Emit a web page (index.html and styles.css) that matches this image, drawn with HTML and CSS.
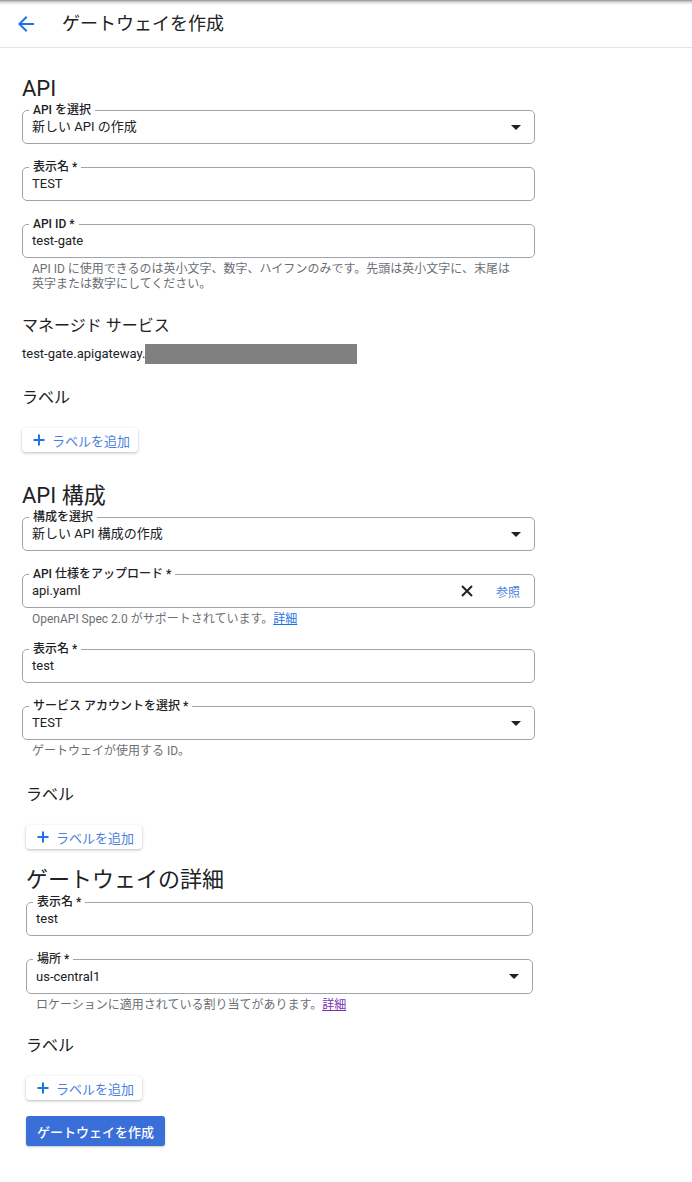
FILE: index.html
```html
<!DOCTYPE html>
<html lang="ja">
<head>
    <meta charset="UTF-8">
    <meta name="viewport" content="width=device-width, initial-scale=1.0">
    <title>ゲートウェイを作成</title>
    <link rel="stylesheet" href="styles.css">
</head>
<body>
    <header class="top-bar">
        <a class="back-link" href="#">
            <svg width="24" height="24" viewBox="0 0 24 24"><path d="M20 11H7.83l5.59-5.59L12 4l-8 8 8 8 1.41-1.41L7.83 13H20v-2z" fill="#1a73e8"/></svg>
        </a>
        <h1 class="page-title">ゲートウェイを作成</h1>
    </header>

    <main class="content">
        <!-- API -->
        <h2 class="section-title">API</h2>
        <fieldset class="field">
            <legend>API を選択</legend>
            <div class="field-row">
                <span class="field-value">新しい API の作成</span>
                <span class="caret"></span>
            </div>
        </fieldset>
        <fieldset class="field field-next">
            <legend>表示名 *</legend>
            <div class="field-row"><span class="field-value">TEST</span></div>
        </fieldset>
        <fieldset class="field field-next">
            <legend>API ID *</legend>
            <div class="field-row"><span class="field-value">test-gate</span></div>
        </fieldset>
        <p class="hint hint-two">API ID に使用できるのは英小文字、数字、ハイフンのみです。先頭は英小文字に、末尾は<br>英字または数字にしてください。</p>

        <h3 class="sub-title managed">マネージド サービス</h3>
        <p class="service-url">test-gate.apigateway.<span class="masked"></span></p>

        <h3 class="sub-title label-title">ラベル</h3>
        <button class="add-label">
            <svg width="12" height="12" viewBox="0 0 12 12"><path d="M6 0.5v11M0.5 6h11" stroke="#1a73e8" stroke-width="2"/></svg>
            ラベルを追加
        </button>

        <!-- API 構成 -->
        <h2 class="section-title section-gap">API 構成</h2>
        <fieldset class="field">
            <legend>構成を選択</legend>
            <div class="field-row">
                <span class="field-value">新しい API 構成の作成</span>
                <span class="caret"></span>
            </div>
        </fieldset>
        <fieldset class="field field-next">
            <legend>API 仕様をアップロード *</legend>
            <div class="field-row">
                <span class="field-value">api.yaml</span>
                <span class="clear-icon">
                    <svg width="12" height="12" viewBox="0 0 12 12"><path d="M1 1l10 10M11 1L1 11" stroke="#202124" stroke-width="2"/></svg>
                </span>
                <a class="browse" href="#">参照</a>
            </div>
        </fieldset>
        <p class="hint">OpenAPI Spec 2.0 がサポートされています。<a href="#">詳細</a></p>
        <fieldset class="field field-after-hint">
            <legend>表示名 *</legend>
            <div class="field-row"><span class="field-value">test</span></div>
        </fieldset>
        <fieldset class="field field-next">
            <legend>サービス アカウントを選択 *</legend>
            <div class="field-row">
                <span class="field-value">TEST</span>
                <span class="caret"></span>
            </div>
        </fieldset>
        <p class="hint">ゲートウェイが使用する ID。</p>

        <div class="shifted">
            <h3 class="sub-title label-title-2">ラベル</h3>
            <button class="add-label">
                <svg width="12" height="12" viewBox="0 0 12 12"><path d="M6 0.5v11M0.5 6h11" stroke="#1a73e8" stroke-width="2"/></svg>
                ラベルを追加
            </button>

            <!-- ゲートウェイの詳細 -->
            <h2 class="section-title section-gap-2">ゲートウェイの詳細</h2>
            <fieldset class="field field-first">
                <legend>表示名 *</legend>
                <div class="field-row"><span class="field-value">test</span></div>
            </fieldset>
            <fieldset class="field field-next">
                <legend>場所 *</legend>
                <div class="field-row tall">
                    <span class="field-value">us-central1</span>
                    <span class="caret"></span>
                </div>
            </fieldset>
            <p class="hint">ロケーションに適用されている割り当てがあります。<a class="visited" href="#">詳細</a></p>

            <h3 class="sub-title label-title-3">ラベル</h3>
            <button class="add-label">
                <svg width="12" height="12" viewBox="0 0 12 12"><path d="M6 0.5v11M0.5 6h11" stroke="#1a73e8" stroke-width="2"/></svg>
                ラベルを追加
            </button>

            <div>
                <button class="create-button">ゲートウェイを作成</button>
            </div>
        </div>
    </main>
</body>
</html>
```

FILE: styles.css
```css
body {
    font-family: Roboto, "Noto Sans CJK JP", sans-serif;
    color: #202124;
    background-color: #fff;
    margin: 0;
    padding: 0;
}
.top-bar {
    display: flex;
    align-items: center;
    height: 47px;
    padding-left: 14px;
    border-bottom: 1px solid #e4e5e7;
    background: linear-gradient(#8f8f8f, #d8d8d8 2px, #fff 5px);
}
.back-link {
    display: flex;
    width: 24px;
    height: 24px;
}
.page-title {
    margin: 0 0 0 24px;
    font-size: 18px;
    font-weight: 400;
    line-height: 24px;
}
.content {
    padding: 27px 0 40px 22px;
}
.section-title {
    margin: 0;
    font-size: 22px;
    font-weight: 400;
    line-height: 28px;
}
.section-gap {
    margin-top: 30px;
}
.section-gap-2 {
    margin-top: 17px;
}
.field {
    box-sizing: border-box;
    width: 513px;
    margin: 0;
    padding: 1px 9px 7px 6px;
    border: 1px solid #a0a4a8;
    border-radius: 5px;
    min-width: 0;
}
.shifted {
    margin-left: 4px;
}
.shifted .field {
    width: 507px;
}
.field-next {
    margin-top: 16px;
}
.field-after-hint {
    margin-top: 15px;
}
.field-first {
    margin-top: 1px;
}
.field legend {
    padding: 0 4px;
    font-size: 12px;
    font-weight: 500;
    line-height: 14px;
}
.field-row {
    display: flex;
    align-items: center;
    height: 18px;
    padding-left: 3px;
    font-size: 13px;
}
.field-row.tall {
    height: 19px;
}
.field-value {
    flex: 1;
    line-height: 18px;
}
.caret {
    width: 0;
    height: 0;
    margin-right: 4px;
    border-left: 5px solid transparent;
    border-right: 5px solid transparent;
    border-top: 5px solid #202124;
}
.clear-icon {
    display: flex;
    margin-right: 23px;
}
.browse {
    margin-right: 5px;
    font-size: 12px;
    color: #4a7fe0;
    text-decoration: none;
}
.hint {
    margin: 4px 0 0 10px;
    font-size: 12px;
    line-height: 15px;
    color: #6b6f74;
}
.hint a {
    color: #1a73e8;
}
.hint a.visited {
    color: #7b2fb5;
}
.sub-title {
    margin: 0;
    font-size: 16px;
    font-weight: 400;
    line-height: 20px;
}
.managed {
    margin-top: 24px;
}
.label-title {
    margin-top: 24px;
}
.label-title-2 {
    margin-top: 26px;
}
.label-title-3 {
    margin-top: 23px;
}
.service-url {
    margin: 8px 0 0;
    font-size: 13px;
    line-height: 20px;
}
.masked {
    display: inline-block;
    width: 212px;
    height: 20px;
    vertical-align: top;
    background-color: #808080;
}
.add-label {
    display: flex;
    align-items: center;
    gap: 7px;
    height: 24px;
    margin-top: 20px;
    padding: 0 8px 0 11px;
    border: none;
    border-radius: 4px;
    background-color: #fff;
    box-shadow: 0 1px 3px rgba(60, 64, 67, 0.35);
    font-family: inherit;
    font-size: 13px;
    color: #4a7fe0;
    cursor: pointer;
}
.create-button {
    height: 30px;
    margin-top: 16px;
    padding: 0 11px;
    border: none;
    border-radius: 3px;
    background-color: #3a6ed8;
    box-shadow: 0 1px 2px rgba(60, 64, 67, 0.3);
    font-family: inherit;
    font-size: 13px;
    font-weight: 500;
    color: #fff;
    cursor: pointer;
}
```
